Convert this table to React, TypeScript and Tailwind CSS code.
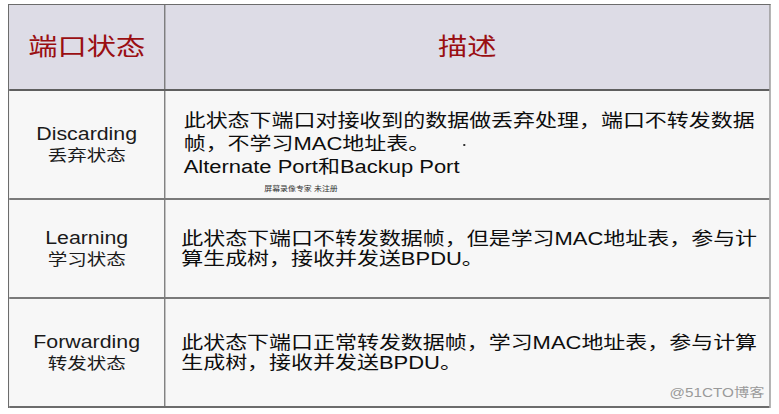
import React from 'react';

type PortState = {
  en: string;
  zh: string;
  lines: string[];
  height: string;
  leading: string;
  pad: string;
};

const states: PortState[] = [
  {
    en: 'Discarding',
    zh: '丢弃状态',
    lines: [
      '此状态下端口对接收到的数据做丢弃处理，端口不转发数据',
      '帧，不学习MAC地址表。',
      'Alternate Port和Backup Port',
    ],
    height: 'h-[109px]',
    leading: 'leading-[23px]',
    pad: 'pl-[15px]',
  },
  {
    en: 'Learning',
    zh: '学习状态',
    lines: ['此状态下端口不转发数据帧，但是学习MAC地址表，参与计', '算生成树，接收并发送BPDU。'],
    height: 'h-[99px]',
    leading: 'leading-[20px]',
    pad: 'pl-[13px]',
  },
  {
    en: 'Forwarding',
    zh: '转发状态',
    lines: ['此状态下端口正常转发数据帧，学习MAC地址表，参与计算', '生成树，接收并发送BPDU。'],
    height: 'h-[109px]',
    leading: 'leading-[20px]',
    pad: 'pl-[13px]',
  },
];

export default function App() {
  return (
    <div className="min-h-[414px] w-[779px] overflow-hidden bg-white pt-[4px] pl-[8px] font-['Liberation_Sans','Noto_Sans_CJK_SC',sans-serif]">
      {/* the source slide is stretched horizontally, so the table is drawn narrow and widened */}
      <div className="w-[625px] origin-top-left scale-x-[1.22] border-t border-l border-r border-[#6c6c6c]">
        <div className="grid h-[86px] grid-cols-[128px_1fr] border-b-2 border-[#5f5f5f] bg-[#dddce6]">
          <div className="flex items-center justify-center border-r border-[#6c6c6c] text-[24px] text-[#9a0f12]">
            端口状态
          </div>
          <div className="flex items-center justify-center text-[24px] text-[#9a0f12]">描述</div>
        </div>

        {states.map((s, i) => (
          <div
            key={s.en}
            className={`relative grid grid-cols-[128px_1fr] bg-[#f7f7f7] ${s.height} ${
              i === states.length - 1 ? 'border-b-2 border-[#6c6c6c]' : 'border-b-2 border-[#7a7a7a]'
            }`}
          >
            <div className="flex flex-col items-center justify-center border-r border-[#6c6c6c] text-[17.5px] leading-[22px] text-[#1a1a1a]">
              <span>{s.en}</span>
              <span className="text-[16px]">{s.zh}</span>
            </div>
            <div className={`flex flex-col justify-center ${s.pad} text-[18px] ${s.leading} whitespace-nowrap text-[#0d0d0d]`}>
              {s.lines.map((line) => (
                <span key={line}>{line}</span>
              ))}
            </div>

            {i === 0 && (
              <>
                <span className="absolute left-[372px] top-[53px] h-[2px] w-[2px] rounded-full bg-[#222]" />
                <span className="absolute left-[209px] top-[95px] text-[6.5px] leading-none text-[#333]">
                  屏幕录像专家 未注册
                </span>
              </>
            )}
            {i === states.length - 1 && (
              <span className="absolute right-[4px] bottom-[7px] text-[12.5px] leading-none text-[#9a9a9a]">
                @51CTO博客
              </span>
            )}
          </div>
        ))}
      </div>
    </div>
  );
}
